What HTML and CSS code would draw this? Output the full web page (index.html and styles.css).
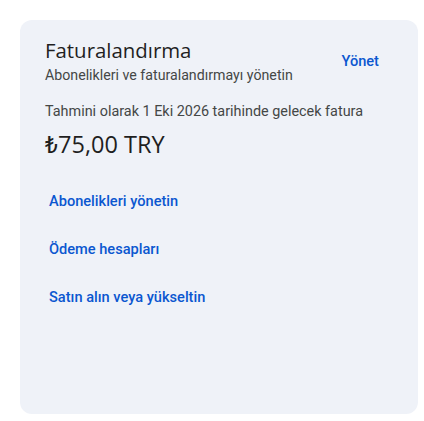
FILE: index.html
```html
<!DOCTYPE html>
<html lang="tr">
  <head>
    <meta charset="UTF-8" />
    <meta name="viewport" content="width=device-width, initial-scale=1.0" />
    <title>Faturalandırma</title>
    <link rel="stylesheet" href="styles.css">
  </head>
  <body>
    <div class="billing-card">
      <div class="card-header">
        <div class="header-text">
          <h1>Faturalandırma</h1>
          <p class="subtitle">Abonelikleri ve faturalandırmayı yönetin</p>
        </div>
        <a class="manage" href="#">Yönet</a>
      </div>
      <p class="next-bill">Tahmini olarak 1 Eki 2026 tarihinde gelecek fatura</p>
      <div class="amount">₺75,00 TRY</div>
      <div class="links">
        <a href="#">Abonelikleri yönetin</a>
        <a href="#">Ödeme hesapları</a>
        <a href="#">Satın alın veya yükseltin</a>
      </div>
    </div>
  </body>
</html>
```

FILE: styles.css
```css
body {
  font-family: Roboto, "Liberation Sans", Arial, sans-serif;
  margin: 0;
  padding: 20px 6px 7px 20px;
  background-color: #ffffff;
}
.billing-card {
  height: 394px;
  box-sizing: border-box;
  background: #eff2f8;
  border-radius: 12px;
  padding: 16px 39px 0 25px;
}
.card-header {
  display: flex;
  justify-content: space-between;
  align-items: flex-start;
}
h1 {
  margin: 0;
  font-family: "Open Sans", Roboto, sans-serif;
  font-size: 20.4px;
  font-weight: 400;
  line-height: 28px;
  color: #1f1f1f;
}
.subtitle {
  margin: 2px 0 0;
  font-size: 14.2px;
  line-height: 18px;
  color: #444746;
}
.manage {
  margin-top: 16px;
  font-size: 14.6px;
  font-weight: 500;
  color: #0b57d0;
  text-decoration: none;
}
.next-bill {
  margin: 18px 0 0;
  font-size: 14.4px;
  line-height: 20px;
  color: #444746;
}
.amount {
  margin-top: 7px;
  font-family: "Open Sans", Roboto, sans-serif;
  font-size: 23.5px;
  line-height: 30px;
  color: #1f1f1f;
}
.links {
  display: flex;
  flex-direction: column;
  align-items: flex-start;
  margin-top: 32px;
  padding-left: 4px;
  gap: 28px;
}
.links a {
  font-size: 14.6px;
  font-weight: 500;
  line-height: 20px;
  color: #0b57d0;
  text-decoration: none;
}
```
